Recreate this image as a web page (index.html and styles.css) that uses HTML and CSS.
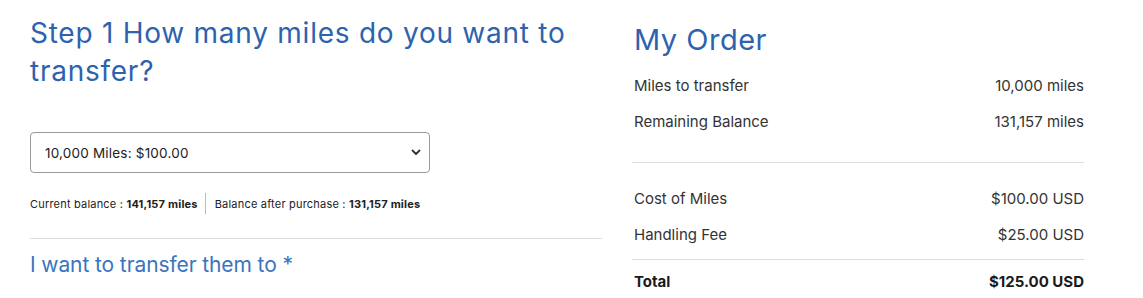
FILE: index.html
```html
<!DOCTYPE html>
<html>
    <head>
        <title>Transfer Miles</title>
        <link rel="stylesheet" href="styles.css">
    </head>
    <body>
        <div class="page">
            <div class="step">
                <h1 class="step-title">Step 1 How many miles do you want to transfer?</h1>
                <div class="picker">
                    <span>10,000 Miles: $100.00</span>
                    <svg class="chev" width="10" height="7" viewBox="0 0 10 7">
                        <path d="M1.5 1.5 L5 5 L8.5 1.5" fill="none" stroke="#333" stroke-width="1.8" stroke-linecap="round" stroke-linejoin="round"/>
                    </svg>
                </div>
                <p class="balance">
                    <span class="bal-item">Current balance : <b>141,157 miles</b></span>
                    <span class="bal-sep"></span>
                    <span class="bal-item">Balance after purchase : <b>131,157 miles</b></span>
                </p>
                <h2 class="sub-title">I want to transfer them to *</h2>
            </div>

            <div class="order">
                <h1 class="order-title">My Order</h1>
                <div class="row"><span>Miles to transfer</span><span>10,000 miles</span></div>
                <div class="row"><span>Remaining Balance</span><span>131,157 miles</span></div>
                <div class="group">
                    <div class="row"><span>Cost of Miles</span><span>$100.00 USD</span></div>
                    <div class="row"><span>Handling Fee</span><span>$25.00 USD</span></div>
                </div>
                <div class="row total"><span>Total</span><span>$125.00 USD</span></div>
            </div>
        </div>
    </body>
</html>
```

FILE: styles.css
```css
body {
    margin: 0;
    background: #fff;
    font-family: Inter, "Noto Sans", sans-serif;
    color: #2b2b2b;
}
.page {
    display: flex;
    gap: 30px;
    padding-left: 30px;
}
.step {
    width: 572px;
}
.step-title {
    margin: 14px 0 0 0;
    width: 560px;
    font-size: 28px;
    line-height: 38px;
    font-weight: 400;
    letter-spacing: 0.75px;
    color: #2d63ae;
}
.picker {
    margin-top: 42px;
    width: 400px;
    height: 41px;
    box-sizing: border-box;
    border: 1px solid #9a9a9a;
    border-radius: 4px;
    padding: 0 8px 0 14px;
    display: flex;
    align-items: center;
    justify-content: space-between;
    font-size: 13.5px;
    letter-spacing: 0.2px;
    color: #222;
}
.balance {
    margin: 20px 0 0 0;
    display: flex;
    align-items: center;
    font-size: 11px;
    letter-spacing: 0.2px;
    color: #222;
}
.bal-sep {
    width: 1px;
    height: 21px;
    background: #bbb;
    margin: 0 9px 0 7px;
}
.sub-title {
    margin: 0;
    margin-top: 24px;
    padding-top: 8px;
    border-top: 1px solid #ddd;
    font-size: 21px;
    line-height: 36px;
    font-weight: 400;
    letter-spacing: -0.1px;
    color: #3a74bd;
}
.order {
    width: 452px;
}
.order-title {
    margin: 22px 0 0 2px;
    font-size: 29px;
    line-height: 36px;
    font-weight: 400;
    letter-spacing: 0.5px;
    color: #2d63ae;
}
.order-title + .row {
    margin-top: 10px;
}
.row {
    display: flex;
    justify-content: space-between;
    padding-left: 2px;
    font-size: 15px;
    line-height: 36px;
    color: #333;
}
.group {
    margin-top: 22px;
    padding-top: 18px;
    border-top: 1px solid #ddd;
    padding-bottom: 6px;
    border-bottom: 1px solid #ddd;
}
.total {
    font-weight: 700;
    color: #1a1a1a;
    padding-top: 4px;
}
```
